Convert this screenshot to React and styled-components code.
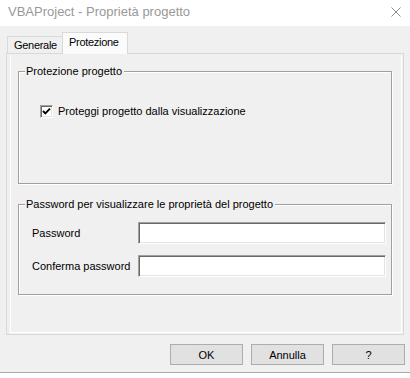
import styled, { createGlobalStyle } from "styled-components";

const GlobalStyle = createGlobalStyle`
  html, body {
    margin: 0;
    padding: 0;
    background: #ffffff;
  }
  body {
    font-family: "Liberation Sans", Arial, sans-serif;
    font-size: 11px;
    color: #000;
  }
`;

const Screen = styled.div`
  width: 410px;
  height: 378px;
  overflow: hidden;
  display: flex;
  flex-direction: column;
`;

const Window = styled.div`
  height: 372px;
  flex: none;
  background: #f0f0f0;
  border-bottom: 1px solid #a9a9a9;
  display: flex;
  flex-direction: column;
`;

const TitleBar = styled.div`
  height: 26px;
  flex: none;
  background: #ffffff;
  display: flex;
  align-items: center;
  justify-content: space-between;
  padding: 0 9px 0 8px;
`;

const Title = styled.span`
  font-size: 13px;
  color: #999999;
  line-height: 16px;
  margin-top: -2px;
`;

const CloseIcon = () => (
  <svg width="10" height="10" viewBox="0 0 10 10" style={{ marginTop: "-2px" }}>
    <path d="M0.5 0.5 L9.5 9.5 M9.5 0.5 L0.5 9.5" stroke="#8a8a8a" strokeWidth="1" fill="none" />
  </svg>
);

const Body = styled.div`
  flex: 1;
  display: flex;
  flex-direction: column;
  padding: 6px 6px 0 6px;
`;

const TabStrip = styled.div`
  display: flex;
  align-items: flex-end;
  height: 21px;
  padding-left: 1px;
  position: relative;
  z-index: 1;
`;

const Tab = styled.div`
  box-sizing: border-box;
  height: ${(p) => (p.$active ? "22px" : "17px")};
  width: ${(p) => p.$width}px;
  margin-bottom: ${(p) => (p.$active ? "-1px" : "0")};
  margin-left: ${(p) => (p.$active ? "-1px" : "0")};
  border: 1px solid #d9d9d9;
  border-bottom: none;
  background: ${(p) => (p.$active ? "#fbfbfb" : "#f0f0f0")};
  padding-left: 6px;
  padding-top: ${(p) => (p.$active ? "3px" : "2px")};
  font-size: 11px;
  letter-spacing: -0.3px;
  line-height: 13px;
  white-space: nowrap;
`;

const Panel = styled.div`
  box-sizing: border-box;
  height: 282px;
  border: 1px solid #d9d9d9;
  padding: 1px 1px 1px 3px;
  display: flex;
`;

const Page = styled.div`
  flex: 1;
  border: 1px solid #ffffff;
  border-top-color: #f0f0f0;
  padding: 9px 9px 0 7px;
  display: flex;
  flex-direction: column;
`;

const Group = styled.fieldset`
  box-sizing: border-box;
  height: ${(p) => p.$height}px;
  margin: ${(p) => p.$top}px 0 0 0;
  padding: 0;
  border: 1px solid #a0a0a0;
  box-shadow: inset 1px 1px 0 #ffffff, 1px 1px 0 #ffffff;
  min-width: 0;
`;

const Legend = styled.legend`
  margin-left: 6px;
  padding: 0 2px 0 1px;
  line-height: 13px;
  font-size: 11px;
  background: #f0f0f0;
`;

const CheckRow = styled.label`
  display: flex;
  align-items: center;
  gap: 5px;
  margin-top: 27px;
  padding-left: 21px;
  line-height: 13px;
`;

const sunken = `
  border-top: 1px solid #a0a0a0;
  border-left: 1px solid #a0a0a0;
  border-bottom: 1px solid #ffffff;
  border-right: 1px solid #ffffff;
  box-shadow: inset 1px 1px 0 #696969, inset -1px -1px 0 #e3e3e3;
  background: #ffffff;
  box-sizing: border-box;
`;

const CheckBox = styled.span`
  ${sunken}
  width: 13px;
  height: 13px;
  flex: none;
  display: flex;
  align-items: center;
  justify-content: center;
`;

const FieldGrid = styled.div`
  display: grid;
  grid-template-columns: 106px 1fr;
  row-gap: 11px;
  align-items: center;
  margin-top: 11px;
  padding: 0 5px 0 13px;
`;

const FieldLabel = styled.span`
  line-height: 13px;
`;

const TextInput = styled.div`
  ${sunken}
  height: 22px;
`;

const Footer = styled.div`
  display: flex;
  justify-content: flex-end;
  gap: 8px;
  padding: 9px 0 0 0;
  margin-right: -1px;
`;

const Button = styled.div`
  box-sizing: border-box;
  width: 73px;
  height: 21px;
  border: 1px solid #adadad;
  background: #e1e1e1;
  display: flex;
  align-items: center;
  justify-content: center;
  font-size: 11px;
`;

const Behind = styled.div`
  flex: 1;
  background: #ffffff;
`;

export default function App() {
  return (
    <>
      <GlobalStyle />
      <Screen>
        <Window>
          <TitleBar>
            <Title>VBAProject - Proprietà progetto</Title>
            <CloseIcon />
          </TitleBar>
          <Body>
            <TabStrip>
              <Tab $width={56}>Generale</Tab>
              <Tab $width={66} $active>Protezione</Tab>
            </TabStrip>
            <Panel>
              <Page>
                <Group $height={119} $top={0}>
                  <Legend>Protezione progetto</Legend>
                  <CheckRow>
                    <CheckBox>
                      <svg width="9" height="9" viewBox="0 0 9 9">
                        <path d="M1 4 L3.3 6.4 L8 1.6" stroke="#000" strokeWidth="1.9" fill="none" />
                      </svg>
                    </CheckBox>
                    Proteggi progetto dalla visualizzazione
                  </CheckRow>
                </Group>
                <Group $height={97} $top={14}>
                  <Legend>Password per visualizzare le proprietà del progetto</Legend>
                  <FieldGrid>
                    <FieldLabel>Password</FieldLabel>
                    <TextInput />
                    <FieldLabel>Conferma password</FieldLabel>
                    <TextInput />
                  </FieldGrid>
                </Group>
              </Page>
            </Panel>
            <Footer>
              <Button>OK</Button>
              <Button>Annulla</Button>
              <Button>?</Button>
            </Footer>
          </Body>
        </Window>
        <Behind>
          <svg width="410" height="5" viewBox="0 0 410 5">
            <rect x="264" y="0" width="1" height="5" fill="#9a9a9a" />
            <rect x="266" y="0" width="2" height="5" fill="#3c3c3c" />
            <rect x="288" y="0" width="1" height="5" fill="#000" />
          </svg>
        </Behind>
      </Screen>
    </>
  );
}
